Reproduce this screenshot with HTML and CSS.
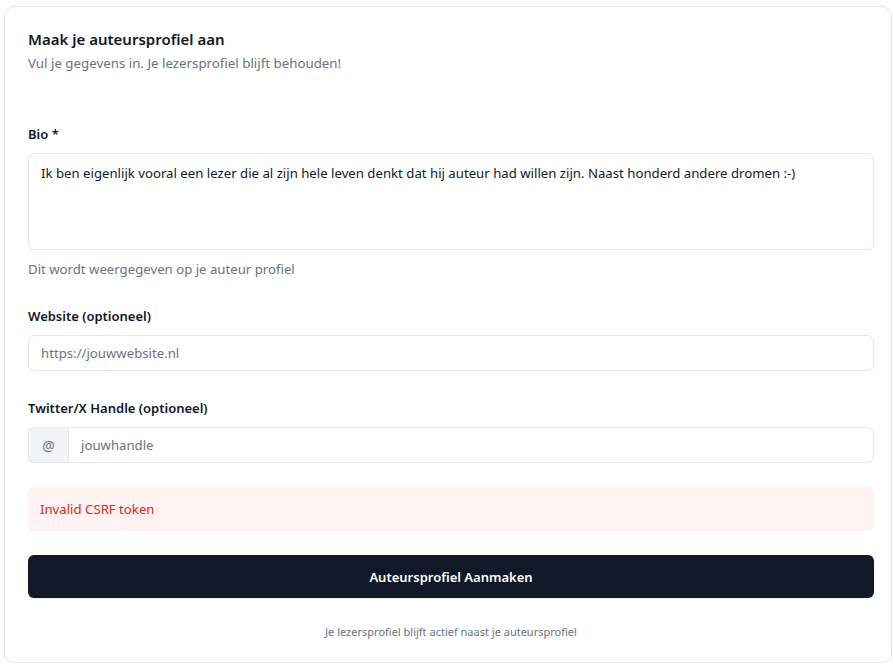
FILE: index.html
```html
<!DOCTYPE html>
<html lang="nl">
<head>
<meta charset="UTF-8">
<title>Auteursprofiel aanmaken</title>
<link rel="stylesheet" href="styles.css">
</head>
<body>
<div class="card">

  <header class="card-head">
    <h1>Maak je auteursprofiel aan</h1>
    <p class="subtitle">Vul je gegevens in. Je lezersprofiel blijft behouden!</p>
  </header>

  <form class="form">
    <div class="field">
      <label class="label" for="bio">Bio *</label>
      <div class="textarea" id="bio">Ik ben eigenlijk vooral een lezer die al zijn hele leven denkt dat hij auteur had willen zijn. Naast honderd andere dromen :-)</div>
      <p class="hint">Dit wordt weergegeven op je auteur profiel</p>
    </div>

    <div class="field">
      <label class="label" for="website">Website (optioneel)</label>
      <div class="input"><span class="placeholder">https://jouwwebsite.nl</span></div>
    </div>

    <div class="field">
      <label class="label" for="twitter">Twitter/X Handle (optioneel)</label>
      <div class="input-group">
        <span class="addon">@</span>
        <div class="input input-joined"><span class="placeholder">jouwhandle</span></div>
      </div>
    </div>

    <div class="alert">Invalid CSRF token</div>

    <button type="button" class="btn">Auteursprofiel Aanmaken</button>

    <p class="footnote">Je lezersprofiel blijft actief naast je auteursprofiel</p>
  </form>

</div>
</body>
</html>
```

FILE: styles.css
```css
*, *::before, *::after { box-sizing: border-box; margin: 0; padding: 0; }

:root {
  --border: #e5e7eb;
  --text: #111827;
  --muted: #6b7280;
  --placeholder: #6b7280;
  --dark: #111827;
}

body {
  font-family: 'Noto Sans', 'Open Sans', sans-serif;
  color: var(--text);
  background: #fff;
  padding: 6px 1px 0 4px;
}

.card {
  border: 1px solid var(--border);
  border-radius: 10px;
  padding: 22px 17px 20px 23px;
  height: 657px;
  box-shadow: 0 1px 2px rgba(0,0,0,0.04);
}

/* ── HEADER ── */
.card-head h1 {
  font-size: 15px;
  font-weight: 600;
  line-height: 20px;
}

.subtitle {
  margin-top: 4px;
  font-size: 13.3px;
  line-height: 20px;
  color: var(--muted);
}

/* ── FORM ── */
.form {
  display: flex;
  flex-direction: column;
  margin-top: 51px;
}

.field {
  display: flex;
  flex-direction: column;
  margin-bottom: 27px;
}

.label {
  font-size: 13px;
  font-weight: 600;
  line-height: 20px;
  margin-bottom: 9px;
}

.textarea {
  height: 97px;
  border: 1px solid var(--border);
  border-radius: 6px;
  padding: 9px 12px;
  font-size: 13.2px;
  line-height: 20px;
}

.hint {
  margin-top: 9px;
  font-size: 13.2px;
  line-height: 20px;
  color: var(--muted);
}

.input {
  height: 36px;
  border: 1px solid var(--border);
  border-radius: 6px;
  padding: 0 12px;
  display: flex;
  align-items: center;
  font-size: 13.2px;
}

.placeholder { color: var(--placeholder); }

.input-group {
  display: flex;
}

.addon {
  width: 40px;
  height: 36px;
  flex-shrink: 0;
  display: flex;
  align-items: center;
  justify-content: center;
  background: #f3f4f6;
  border: 1px solid var(--border);
  border-right: none;
  border-radius: 6px 0 0 6px;
  font-size: 14px;
  color: var(--muted);
}

.input-joined {
  flex: 1;
  border-radius: 0 6px 6px 0;
}

.alert {
  height: 44px;
  display: flex;
  align-items: center;
  padding: 0 12px;
  background: #fef2f2;
  border-radius: 6px;
  font-size: 13.2px;
  color: #dc2626;
  margin-top: -3px;
}

.btn {
  margin-top: 24px;
  height: 43px;
  border: none;
  border-radius: 6px;
  background: var(--dark);
  color: #fff;
  font-family: inherit;
  font-size: 13px;
  font-weight: 600;
  box-shadow: 0 1px 2px rgba(0,0,0,0.08);
}

.footnote {
  margin-top: 26px;
  text-align: center;
  font-size: 11px;
  color: var(--muted);
}
```
